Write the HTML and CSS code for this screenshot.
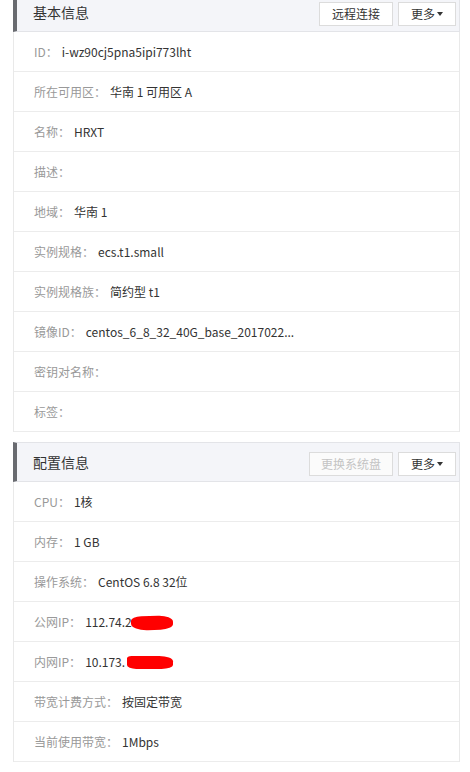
FILE: index.html
```html
<!DOCTYPE html>
<html>
<head>
	<title>实例详情</title>
	<link rel="stylesheet" href="styles.css">
</head>
<body>

<div class="pagina">

	<div class="panel primero">
		<div class="panel-cabecera">
			<span class="panel-titulo">基本信息</span>
			<div class="acciones">
				<button class="boton ancho">远程连接</button>
				<button class="boton">更多<i class="flecha"></i></button>
			</div>
		</div>
		<ul class="lista">
			<li><span class="etiqueta">ID：</span><span class="valor">i-wz90cj5pna5ipi773lht</span></li>
			<li><span class="etiqueta">所在可用区：</span><span class="valor">华南 1 可用区 A</span></li>
			<li><span class="etiqueta">名称：</span><span class="valor">HRXT</span></li>
			<li><span class="etiqueta">描述：</span></li>
			<li><span class="etiqueta">地域：</span><span class="valor">华南 1</span></li>
			<li><span class="etiqueta">实例规格：</span><span class="valor">ecs.t1.small</span></li>
			<li><span class="etiqueta">实例规格族：</span><span class="valor">简约型 t1</span></li>
			<li><span class="etiqueta">镜像ID：</span><span class="valor">centos_6_8_32_40G_base_2017022...</span></li>
			<li><span class="etiqueta">密钥对名称：</span></li>
			<li><span class="etiqueta">标签：</span></li>
		</ul>
	</div>

	<div class="panel">
		<div class="panel-cabecera">
			<span class="panel-titulo">配置信息</span>
			<div class="acciones">
				<button class="boton mas-ancho" disabled>更换系统盘</button>
				<button class="boton">更多<i class="flecha"></i></button>
			</div>
		</div>
		<ul class="lista">
			<li><span class="etiqueta">CPU：</span><span class="valor">1核</span></li>
			<li><span class="etiqueta">内存：</span><span class="valor">1 GB</span></li>
			<li><span class="etiqueta">操作系统：</span><span class="valor">CentOS 6.8 32位</span></li>
			<li><span class="etiqueta">公网IP：</span><span class="valor">112.74.2<span class="tachon tachon-a"></span></span></li>
			<li><span class="etiqueta">内网IP：</span><span class="valor">10.173.<span class="tachon tachon-b"></span></span></li>
			<li><span class="etiqueta">带宽计费方式：</span><span class="valor">按固定带宽</span></li>
			<li><span class="etiqueta">当前使用带宽：</span><span class="valor">1Mbps</span></li>
		</ul>
	</div>

</div>

</body>
</html>
```

FILE: styles.css
```css
html, body {
	margin: 0;
	padding: 0;
	background: #fff;
}

body {
	font-family: "Noto Sans CJK SC", "Microsoft YaHei", sans-serif;
	font-size: 12px;
	color: #333;
}

div.pagina {
	padding-left: 13px;
	width: 447px;
}

div.panel {
	margin-bottom: 10px;
}

div.panel.primero {
	margin-top: -8px;
}

div.panel-cabecera {
	height: 40px;
	box-sizing: border-box;
	display: flex;
	align-items: center;
	justify-content: space-between;
	background-color: #f4f5f9;
	border: 1px solid #e3e4e8;
	border-left: 4px solid #696b70;
	padding-left: 16px;
	padding-right: 3px;
}

span.panel-titulo {
	font-size: 14px;
	color: #333;
	line-height: 20px;
}

div.acciones {
	display: flex;
	gap: 5px;
	margin-top: 3px;
}

button.boton {
	height: 24px;
	box-sizing: border-box;
	padding: 0;
	background-color: #fff;
	border: 1px solid #dcdcdc;
	font-family: "Noto Sans CJK SC", sans-serif;
	font-size: 12px;
	color: #333;
	line-height: 22px;
	white-space: nowrap;
	display: flex;
	align-items: center;
	justify-content: center;
	width: 58px;
}

button.boton.ancho {
	width: 74px;
}

button.boton.mas-ancho {
	width: 84px;
}

button.boton:disabled {
	color: #c4c4c4;
	background-color: #fbfbfb;
}

i.flecha {
	display: inline-block;
	width: 0;
	height: 0;
	margin-left: 2px;
	border-top: 4px solid #333;
	border-left: 3px solid transparent;
	border-right: 3px solid transparent;
}

ul.lista {
	list-style: none;
	margin: 0;
	padding: 0;
	border-left: 1px solid #e9e9e9;
	border-right: 1px solid #e9e9e9;
}

ul.lista li {
	height: 40px;
	box-sizing: border-box;
	border-bottom: 1px solid #ececec;
	padding-left: 20px;
	display: flex;
	align-items: center;
	line-height: 18px;
}

span.etiqueta {
	color: #999;
	margin-right: 4px;
}

span.valor {
	color: #333;
	display: flex;
	align-items: center;
}

/* zonas tachadas en rojo */
span.tachon {
	display: inline-block;
	background-color: #f00;
}

span.tachon-a {
	width: 42px;
	height: 14px;
	margin-left: -1px;
	margin-top: 2px;
	border-radius: 25% 35% 30% 40% / 30% 45% 40% 50%;
	transform: rotate(-2deg);
}

span.tachon-b {
	width: 46px;
	height: 13px;
	margin-left: 2px;
	margin-top: 1px;
	border-radius: 10% 30% 25% 20% / 20% 40% 30% 30%;
}
```
